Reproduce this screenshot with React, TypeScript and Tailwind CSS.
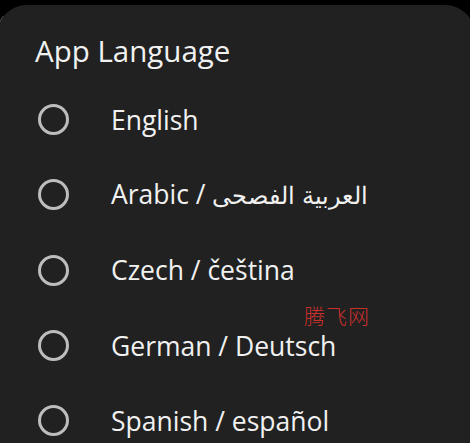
const languages = [
  { name: 'English' },
  { name: 'Arabic / ', native: 'العربية الفصحى' },
  { name: 'Czech / čeština' },
  { name: 'German / Deutsch' },
  { name: 'Spanish / español' },
];

export default function App() {
  return (
    <div className="relative w-[470px] h-[443px] overflow-hidden bg-black pt-[5px] font-['Open_Sans','Noto_Sans',sans-serif]">
      <div className="absolute left-0 top-[16px] h-[10px] w-[3px] rotate-[30deg] bg-[#5a5a5a]" />
      <div className="relative -ml-[3px] w-[478px] h-[460px] rounded-t-[30px] bg-[#212121] pt-[28px]">
        <h2 className="pl-[38px] text-[29.5px] leading-[36px] text-[#f1f1f1]">App Language</h2>
        <div className="mt-[13px]">
          {languages.map((lang) => (
            <div key={lang.name} className="flex h-[75.3px] items-center pl-[41px]">
              <span className="h-[31px] w-[31px] shrink-0 rounded-full border-[3px] border-[#bdbdbd]" />
              <span className="ml-[42px] text-[26.5px] leading-[32px] text-[#f1f1f1]">
                {lang.name}
                {lang.native && <span className="text-[24px]">{lang.native}</span>}
              </span>
            </div>
          ))}
        </div>
        <div className="absolute left-[307px] top-[298px] text-[21px] leading-[24px] tracking-[1px] text-[#c9302c] font-['Noto_Sans_CJK_SC',sans-serif] font-light">
          腾飞网
        </div>
      </div>
    </div>
  );
}
